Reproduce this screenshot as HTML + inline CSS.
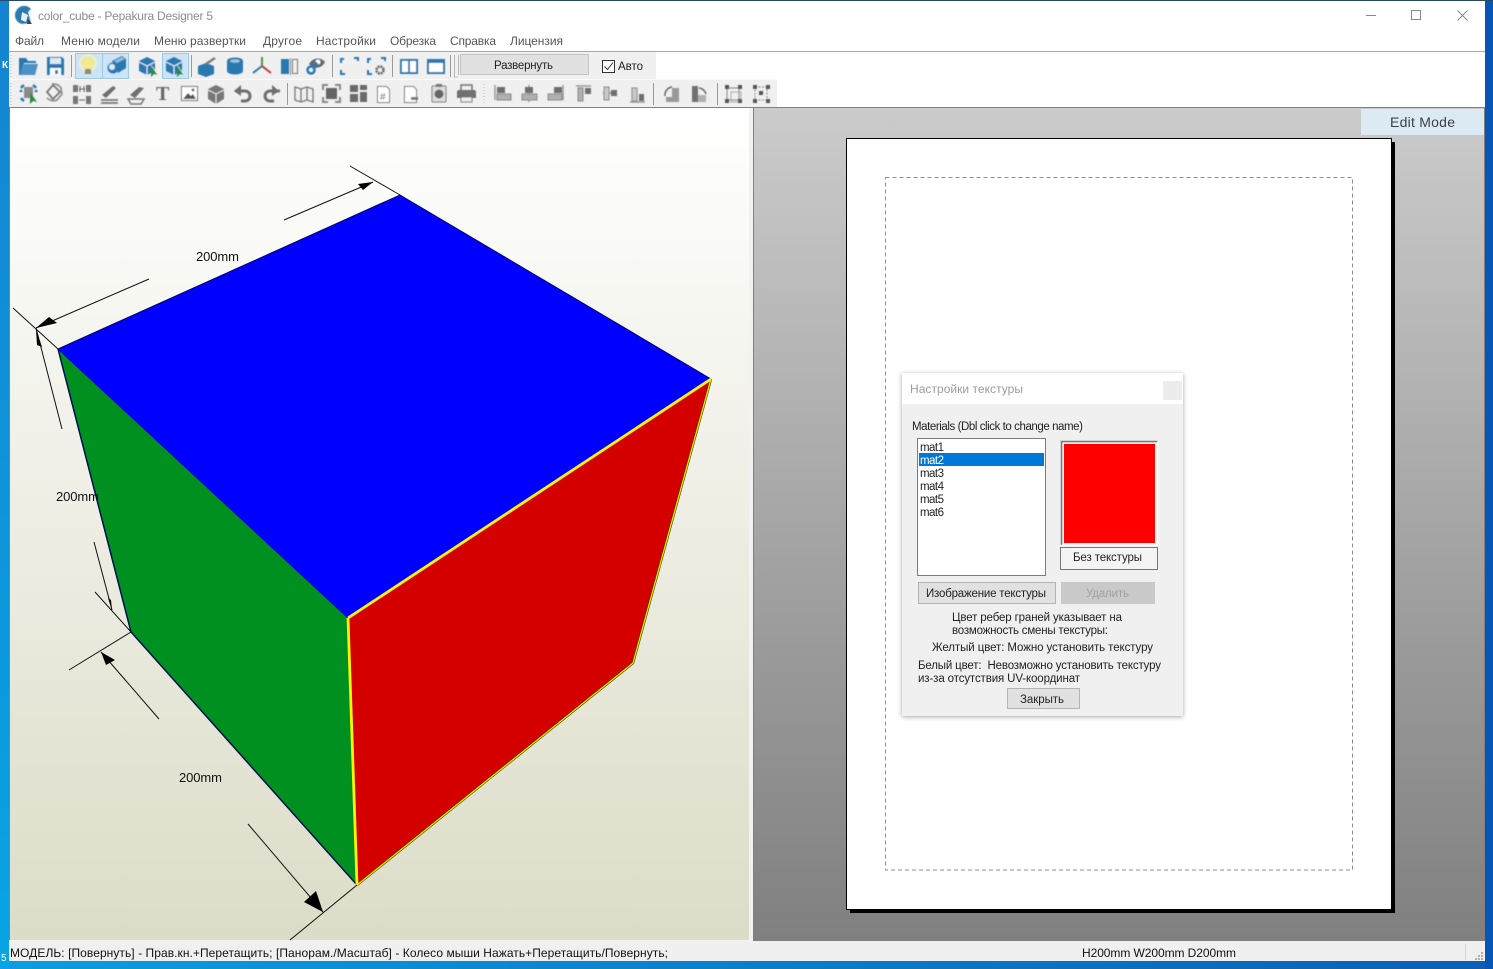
<!DOCTYPE html>
<html><head><meta charset="utf-8"><title>color_cube - Pepakura Designer 5</title>
<style>
html,body{margin:0;padding:0;width:1493px;height:969px;overflow:hidden;background:#0a80d0}
svg{display:block;position:absolute;left:0;top:0}
text{font-family:"Liberation Sans","Noto Sans CJK SC",sans-serif;font-size:11.5px;fill:#222}
.m{font-size:12px;fill:#555}
.d{font-size:13px;fill:#111}
</style></head><body>
<svg width="1493" height="969" viewBox="0 0 1493 969" xmlns="http://www.w3.org/2000/svg">
<defs>
<linearGradient id="lv" x1="0" y1="0" x2="0" y2="1"><stop offset="0" stop-color="#fff"/><stop offset="1" stop-color="#dcdcc8"/></linearGradient>
<linearGradient id="rv" x1="0" y1="0" x2="0" y2="1"><stop offset="0" stop-color="#cbcbcb"/><stop offset="1" stop-color="#808080"/></linearGradient>
<linearGradient id="bb" x1="0" y1="0" x2="1" y2="0"><stop offset="0" stop-color="#0a9ee0"/><stop offset="1" stop-color="#0c5fb4"/></linearGradient>
<linearGradient id="ls" x1="0" y1="0" x2="0" y2="1"><stop offset="0" stop-color="#1583d0"/><stop offset="1" stop-color="#08a4e4"/></linearGradient>
<filter id="sh" x="-10%" y="-10%" width="120%" height="120%"><feDropShadow dx="0" dy="1" stdDeviation="2.5" flood-color="#000" flood-opacity=".35"/></filter>
<filter id="soft"><feGaussianBlur stdDeviation=".4"/></filter>
</defs>

<!-- desktop -->
<rect width="1493" height="969" fill="url(#bb)"/>
<rect x="0" y="0" width="9" height="969" fill="url(#ls)"/>
<rect x="1485" y="0" width="8" height="969" fill="#0755b4"/>
<rect x="0" y="0" width="1493" height="1" fill="#264a66"/>
<text x="2" y="68" style="font-size:10px;fill:#fff;font-weight:bold">К</text>
<text x="1" y="961" style="font-size:10px;fill:#fff">5</text>

<!-- window -->
<rect x="9" y="1" width="1476" height="960" fill="#fff"/>
<path d="M16,11 a9,9 0 0 1 15,-2 l-3,3 l3,11 l-9,1 a9,9 0 0 1 -6,-13z" fill="#2a7ab0" filter="url(#soft)"/>
<path d="M22,12 l6,3 l-2,7 l-5,-2z" fill="#e8eef2"/>
<path d="M28,19 l4,5 h-5z" fill="#444"/>
<text x="38" y="20" textLength="175" style="font-size:12px;fill:#8c8c8c">color_cube - Pepakura Designer 5</text>
<path d="M1366,15.5h10" stroke="#888" fill="none"/>
<rect x="1411.500" y="10.500" width="9" height="9" fill="none" stroke="#888"/>
<path d="M1457.500,10.500l10,10M1467.500,10.500l-10,10" stroke="#888" fill="none"/>

<text class="m" x="15" y="45" textLength="29">Файл</text>
<text class="m" x="61" y="45" textLength="79">Меню модели</text>
<text class="m" x="154" y="45" textLength="92">Меню развертки</text>
<text class="m" x="263" y="45" textLength="39">Другое</text>
<text class="m" x="316" y="45" textLength="60">Настройки</text>
<text class="m" x="390" y="45" textLength="46">Обрезка</text>
<text class="m" x="450" y="45" textLength="46">Справка</text>
<text class="m" x="510" y="45" textLength="53">Лицензия</text>
<rect x="9" y="51" width="1476" height="1" fill="#a8a8a8"/>

<!-- toolbars -->
<rect x="9" y="52" width="647" height="27" fill="#f0f0f0"/>
<rect x="9" y="80" width="768" height="27" fill="#f0f0f0"/>
<rect x="9" y="79" width="768" height="1" fill="#fafafa"/>
<path d="M11,55v22M11,83v22M484,84v20" stroke="#bbb" stroke-dasharray="1 2" fill="none"/>
<path d="M71.500,55v22M191.500,55v22M332.500,55v22M392.500,55v22M450.500,55v22M287.500,83v22M653.500,83v22M717.500,83v22" stroke="#9a9a9a" fill="none"/>
<path d="M454.500,55v22h3M458.500,55v20" stroke="#b8b8b8" fill="none"/>
<rect x="75.500" y="53.500" width="27" height="25" fill="#cde4f7" stroke="#9cc8ea"/>
<rect x="102.500" y="53.500" width="26" height="25" fill="#cde4f7" stroke="#9cc8ea"/>
<rect x="162.500" y="53.500" width="26" height="25" fill="#cde4f7" stroke="#9cc8ea"/>

<g filter="url(#soft)">
<!-- folder -->
<path d="M19,75V58h7l2,3h8v2H24l-3,12z" fill="#2a78b0"/><path d="M23,64h15l-3,11H20z" fill="#4b93c6"/>
<!-- save -->
<path d="M47,57h15l2,2v16H47z" fill="#2a78b0"/><rect x="50" y="58" width="11" height="6" fill="#dce9f2"/><rect x="50" y="68" width="11" height="7" fill="#fff"/><rect x="55" y="70" width="3" height="4" fill="#2a78b0"/>
<!-- bulb -->
<circle cx="88" cy="63" r="6.500" fill="#f4e98f"/><circle cx="88" cy="63" r="8" fill="none" stroke="#f8f2c0" stroke-width="1.500"/><rect x="85" y="69" width="6" height="5" fill="#8a8a70"/>
<!-- cube sphere -->
<path d="M112,61l10,-5l4,3v9l-8,5z" fill="#2a78b0"/><path d="M114,61l8,-4l3,2l-8,4z" fill="#8fbcd9"/><circle cx="113" cy="68" r="5.500" fill="#2a78b0"/><circle cx="112" cy="67" r="3" fill="#dfeaf3"/>
<!-- cube + cursor -->
<path d="M147,57l8,4v10l-8,4l-8,-4V61z" fill="#2a78b0"/><path d="M139,62l8,4l8,-4M147,66v9" stroke="#dcebf5" fill="none" stroke-width="1.200"/><path d="M151,65l0,12l3,-3l4,1z" fill="#2e8b3a"/><path d="M151,65l7,10" stroke="#fff" stroke-width=".6"/>
<path d="M174,57l8,4v10l-8,4l-8,-4V61z" fill="#2a78b0"/><path d="M166,62l8,4l8,-4M174,66v9" stroke="#dcebf5" fill="none" stroke-width="1.200"/><path d="M177,65l0,12l3,-3l4,1z" fill="#2e8b3a"/><path d="M177,65l7,10" stroke="#fff" stroke-width=".6"/>
<!-- cube brush -->
<path d="M198,66l8,-3l8,3v8l-8,3l-8,-3z" fill="#2a78b0"/><path d="M206,64l9,-6" stroke="#7a7a7a" stroke-width="2.500"/>
<!-- cylinder -->
<path d="M227,61a8,3.500 0 0 1 16,0v10a8,3.500 0 0 1 -16,0z" fill="#2a78b0"/><ellipse cx="235" cy="61" rx="5" ry="1.800" fill="#9cc4e0"/>
<!-- axes -->
<path d="M262,66V57" stroke="#3c9a48" stroke-width="2" fill="none"/><path d="M262,66l-9,7" stroke="#2a78b0" stroke-width="2" fill="none"/><path d="M262,66l9,7" stroke="#b83a3a" stroke-width="2" fill="none"/>
<!-- mirror -->
<rect x="281" y="59" width="8" height="15" fill="#2a78b0"/><rect x="290" y="58" width="1" height="17" fill="#888"/><rect x="292.500" y="59.500" width="5" height="14" fill="none" stroke="#777"/>
<!-- eye -->
<path d="M309,64c4,-7 12,-7 16,-2c-3,6 -10,8 -16,2z" fill="#666"/><circle cx="318" cy="62" r="2.500" fill="#fff"/><circle cx="311" cy="70" r="3.500" fill="none" stroke="#2a78b0" stroke-width="2.500"/><circle cx="315" cy="65" r="2.500" fill="none" stroke="#2a78b0" stroke-width="1.500"/>
<!-- frames -->
<path d="M341,63v-4h3M341,70v4h4M354,58h4v3" stroke="#2a78b0" stroke-width="2" fill="none"/>
<path d="M368,63v-4h3M368,70v4h4M381,58h4v3" stroke="#2a78b0" stroke-width="2" fill="none"/><circle cx="380" cy="70" r="3.500" fill="none" stroke="#666" stroke-width="2.500" stroke-dasharray="2 .8"/>
<!-- panes -->
<rect x="401" y="60" width="16" height="13" fill="#fff" stroke="#2a78b0" stroke-width="2"/><path d="M409,60v13" stroke="#2a78b0" stroke-width="2"/>
<rect x="428" y="60" width="16" height="13" fill="#fff" stroke="#2a78b0" stroke-width="2"/><path d="M428,62h16" stroke="#2a78b0" stroke-width="2"/>

<!-- row 2 -->
<rect x="24" y="87" width="9" height="11" fill="#8a8a8a"/>
<path d="M24,85a11,11 0 0 0 -3,3M21,98a11,11 0 0 0 3,3M33,85a11,11 0 0 1 3,3" fill="none" stroke="#2a78b0" stroke-width="2.500"/>
<path d="M21,89l-2,3l4,0zM36,89l-2,3l4,0z" fill="#2a78b0"/>
<path d="M30,92l0,12l3,-3l4,1z" fill="#2e8b3a"/>
<path d="M47,92l6,-7l7,7l-7,7z" fill="none" stroke="#777" stroke-width="1.800"/><path d="M52,84a9,9 0 0 1 9,4l1,6l-5,6a9,9 0 0 1 -10,-2" fill="none" stroke="#888" stroke-width="1.600"/>
<path d="M73,85h5v7h-5zM86,85h5v7h-5zM73,96h5v8h-5zM86,96h5v8h-5z" fill="#777"/><path d="M80,86v6M84,86v6M79,100h6M79,89h6" stroke="#666"/>
<path d="M102,95l11,-9l3,2l-10,10z" fill="#707070"/><path d="M101,100h17M101,103h17" stroke="#666" stroke-width="1.500"/>
<path d="M130,95l9,-8l5,1l-9,10z" fill="#707070"/><path d="M128,99h16l-3,5h-10z" fill="none" stroke="#777" stroke-width="1.500"/>
<text x="156" y="100" style="font-family:'Liberation Serif',serif;font-size:20px;font-weight:bold;fill:#666">T</text>
<rect x="181.500" y="86.500" width="16" height="14" fill="#fff" stroke="#666"/><path d="M183,99l5,-6l3,3l2,-2l3,5z" fill="#555"/><circle cx="193" cy="90" r="1.500" fill="#666"/>
<path d="M216,85l8,4v10l-8,5l-8,-5V89z" fill="#777"/><path d="M208,90l8,4l8,-4M216,94v10" stroke="#e8e8e8" fill="none"/>
<path d="M235,91h10a5,5 0 0 1 0,10h-4" fill="none" stroke="#6e6e6e" stroke-width="3"/><path d="M241,85l-7,6l7,5z" fill="#6e6e6e"/>
<path d="M280,91h-10a5,5 0 0 0 0,10h4" fill="none" stroke="#6e6e6e" stroke-width="3"/><path d="M272,85l7,6l-7,5z" fill="#6e6e6e"/>
<path d="M295,87l6,2l6,-2l6,2v13l-6,-2l-6,2l-6,-2z" fill="none" stroke="#777" stroke-width="1.300"/><path d="M301,89v13M307,87v13" stroke="#777" stroke-width="1.300"/>
<rect x="326" y="88" width="11" height="11" fill="#666"/><path d="M323,90v-5h5M340,90v-5h-5M323,97v5h5M340,97v5h-5" stroke="#888" stroke-width="2" fill="none"/>
<path d="M350,85h8v7h-8zM350,94h8v8h-8zM360,85h7v5h-7zM360,92h7v10h-7z" fill="#6a6a6a"/>
<path d="M377.500,86.500h9l3,3v13h-12z" fill="#fff" stroke="#777"/><text x="380" y="100" style="font-size:10px;fill:#555">#</text>
<path d="M404.500,86.500h9l3,3v13h-12z" fill="#fff" stroke="#777"/><path d="M411,97h7v3h-7z" fill="#777"/>
<rect x="432" y="86" width="14" height="16" rx="1" fill="#ddd" stroke="#777"/><circle cx="439" cy="94" r="4.500" fill="#666"/><rect x="436" y="84" width="6" height="3" fill="#777"/>
<rect x="461" y="85" width="11" height="6" fill="none" stroke="#777" stroke-width="1.500"/><path d="M457,92a2,2 0 0 1 2,-2h15a2,2 0 0 1 2,2v6h-19z" fill="#707070"/><rect x="461" y="97" width="11" height="5" fill="#eee" stroke="#777"/>
<!-- align -->
<path d="M495,85v15" stroke="#999" stroke-width="1.500"/><rect x="497" y="87" width="8" height="6" fill="#6e6e6e"/><rect x="497" y="94" width="14" height="6" fill="#b0b0b0" stroke="#888"/>
<path d="M529,85v17" stroke="#999" stroke-width="1.500"/><rect x="525" y="87" width="8" height="6" fill="#6e6e6e"/><rect x="522" y="94" width="15" height="6" fill="#b0b0b0" stroke="#888"/>
<path d="M563,85v15" stroke="#999" stroke-width="1.500"/><rect x="554" y="87" width="8" height="6" fill="#6e6e6e"/><rect x="548" y="94" width="14" height="6" fill="#b0b0b0" stroke="#888"/>
<path d="M576,86h15" stroke="#999" stroke-width="1.500"/><rect x="578" y="88" width="5" height="13" fill="#b0b0b0" stroke="#888"/><rect x="585" y="88" width="6" height="6" fill="#6e6e6e"/>
<path d="M603,93h14" stroke="#999" stroke-width="1.500"/><rect x="604" y="87" width="5" height="13" fill="#c8c8c8" stroke="#888"/><rect x="611" y="90" width="6" height="6" fill="#6e6e6e"/>
<path d="M630,102h15" stroke="#999" stroke-width="1.500"/><rect x="632" y="88" width="5" height="13" fill="#c8c8c8" stroke="#888"/><rect x="639" y="94" width="5" height="7" fill="#6e6e6e"/>
<path d="M666,102v-5h6v-9h7v14z" fill="#999"/><path d="M665,96a8,8 0 0 1 7,-9" fill="none" stroke="#666" stroke-width="1.500"/>
<path d="M692,86h6v16h-6z" fill="#707070"/><path d="M698,95h8v7h-8z" fill="#b0b0b0"/><path d="M699,88a8,8 0 0 1 7,6" fill="none" stroke="#666" stroke-width="1.500"/>
<rect x="727" y="88" width="12" height="12" fill="none" stroke="#888"/><rect x="731" y="92" width="10" height="10" fill="none" stroke="#aaa"/>
<path d="M725,85h4v4h-4zM738,85h4v4h-4zM725,99h4v4h-4zM738,99h4v4h-4z" fill="#555"/>
<rect x="755" y="87" width="12" height="13" fill="none" stroke="#888" stroke-dasharray="2 1.500"/>
<path d="M753,85h4v4h-4zM766,85h4v4h-4zM753,99h4v4h-4zM766,99h4v4h-4zM759,91h4v4h-4z" fill="#555"/>
</g>

<rect x="460.500" y="54.500" width="128" height="20" fill="#e1e1e1" stroke="#c4c4c4"/>
<text x="494" y="69" textLength="59">Развернуть</text>
<rect x="602.500" y="60.500" width="12" height="12" fill="#fff" stroke="#333"/>
<path d="M604.500,66.500l3,3l5.500,-7" stroke="#333" fill="none"/>
<text x="618" y="70" textLength="25">Авто</text>

<!-- left viewport -->
<rect x="9" y="107" width="745" height="834" fill="#f2f2f2"/>
<rect x="9" y="107" width="745" height="1" fill="#808080"/>
<rect x="9" y="108" width="1" height="832" fill="#808080"/>
<rect x="10" y="108" width="739" height="832" fill="url(#lv)"/>

<!-- cube -->
<polygon points="58,349 400,195 711,379 348,618" fill="#0000fe"/>
<polygon points="58,349 348,618 357,885 131,632" fill="#009020"/>
<polygon points="348,618 711,379 633,663 357,885" fill="#d40000"/>
<path d="M58,349L400,195L711,379" fill="none" stroke="#000060" stroke-width="1"/>
<path d="M58,349L131,632L357,885" fill="none" stroke="#001050" stroke-width="1.500"/>
<path d="M58,349L348,618" fill="none" stroke="#0000e0" stroke-width="1"/>
<path d="M711,379L633,663L357,885" fill="none" stroke="#3a3000" stroke-width="2.400"/>
<path d="M711,379L633,663L357,885" fill="none" stroke="#f0e800" stroke-width="1.300"/>
<path d="M348,618L711,379M348,618L357,885" fill="none" stroke="#f5f500" stroke-width="2.800"/>

<!-- dimensions -->
<g fill="none" stroke="#111" stroke-width="1">
<path d="M13,308L58,349"/>
<path d="M149,279L36,328"/>
<path d="M62,429L36,328"/>
<path d="M350,166L400,195"/>
<path d="M284,220L373,182"/>
<path d="M94,542L112,610"/>
<path d="M95,592L131,632"/>
<path d="M69,670L131,632"/>
<path d="M159,719L101,652"/>
<path d="M248,824L323,912"/>
<path d="M357,885L290,940"/>
</g>
<g fill="#000">
<polygon points="36,328 49,317 57,323"/>
<polygon points="36,329 42,347 37,345"/>
<polygon points="373,182 358,184 363,190"/>
<polygon points="112,610 108,598 111,600"/>
<polygon points="101,652 115,660 106,665"/>
<polygon points="323,912 304,902 316,891"/>
</g>
<text class="d" x="196" y="261" textLength="43">200mm</text>
<text class="d" x="56" y="501" textLength="43">200mm</text>
<text class="d" x="179" y="782" textLength="43">200mm</text>

<!-- right viewport -->
<rect x="753" y="107" width="732" height="834" fill="#808080"/>
<rect x="754" y="108" width="730" height="832" fill="url(#rv)"/>
<rect x="1361" y="109" width="123" height="26" fill="#dcebf3"/>
<text x="1390" y="127" textLength="65" style="font-size:14px;fill:#3a4048">Edit Mode</text>
<rect x="850" y="142" width="545" height="771" fill="#000"/>
<rect x="846.500" y="138.500" width="545" height="771" fill="#fff" stroke="#000"/>
<rect x="885.500" y="177.500" width="467" height="692.500" fill="none" stroke="#8c8c8c" stroke-dasharray="4 3"/>

<!-- dialog -->
<rect x="902" y="373" width="281" height="343" fill="#f0f0f0" filter="url(#sh)"/>
<rect x="902" y="373" width="281" height="31" fill="#fff"/>
<text x="910" y="393" textLength="113" style="font-size:12px;fill:#9c9c9c">Настройки текстуры</text>
<rect x="1163" y="381" width="19" height="19" fill="#ececec"/>
<text x="912" y="430" textLength="171">Materials (Dbl click to change name)</text>
<rect x="917.500" y="438.500" width="128" height="137" fill="#fff" stroke="#7a7a7a"/>
<rect x="919" y="453" width="125" height="13" fill="#0078d7"/>
<text x="920" y="451" textLength="24">mat1</text>
<text x="920" y="464" textLength="24" style="fill:#fff">mat2</text>
<text x="920" y="477" textLength="24">mat3</text>
<text x="920" y="490" textLength="24">mat4</text>
<text x="920" y="503" textLength="24">mat5</text>
<text x="920" y="516" textLength="24">mat6</text>
<path d="M1061.500,545V441.500H1157.500" fill="none" stroke="#777" stroke-width="1.500"/>
<path d="M1157.500,441.500V545H1061.500" fill="none" stroke="#fff"/>
<rect x="1064" y="444" width="91" height="99" fill="#fe0000"/>
<rect x="1060.500" y="547.500" width="97" height="22" fill="#f4f4f4" stroke="#777"/>
<text x="1073" y="561" textLength="69">Без текстуры</text>
<rect x="918.500" y="582.500" width="137" height="21" fill="#e1e1e1" stroke="#b4b4b4"/>
<text x="926" y="597" textLength="120">Изображение текстуры</text>
<rect x="1061" y="582" width="94" height="22" fill="#c9c9c9"/>
<text x="1086" y="597" textLength="43" style="fill:#a2a2a2">Удалить</text>
<text x="952" y="621" textLength="170">Цвет ребер граней указывает на</text>
<text x="952" y="634" textLength="156">возможность смены текстуры:</text>
<text x="932" y="651" textLength="221">Желтый цвет: Можно установить текстуру</text>
<text x="918" y="669" textLength="243">Белый цвет:&#160;&#160;Невозможно установить текстуру</text>
<text x="918" y="682" textLength="162">из-за отсутствия UV-координат</text>
<rect x="1007.500" y="688.500" width="72" height="20" fill="#e1e1e1" stroke="#b4b4b4"/>
<text x="1020" y="703" textLength="44">Закрыть</text>

<!-- status bar -->
<rect x="9" y="941" width="1476" height="20" fill="#f0f0f0"/>
<text x="10" y="957" textLength="658" style="font-size:12px;fill:#111">МОДЕЛЬ: [Повернуть] - Прав.кн.+Перетащить; [Панорам./Масштаб] - Колесо мыши Нажать+Перетащить/Повернуть;</text>
<text x="1082" y="957" textLength="154" style="font-size:12px;fill:#111">H200mm W200mm D200mm</text>
<path d="M1465.500,944v16" stroke="#d4d4d4"/>
<path d="M1481,952h2v2h-2zM1478,955h2v2h-2zM1481,955h2v2h-2zM1475,958h2v2h-2zM1478,958h2v2h-2zM1481,958h2v2h-2z" fill="#b0b0b0"/>
</svg>
</body></html>
